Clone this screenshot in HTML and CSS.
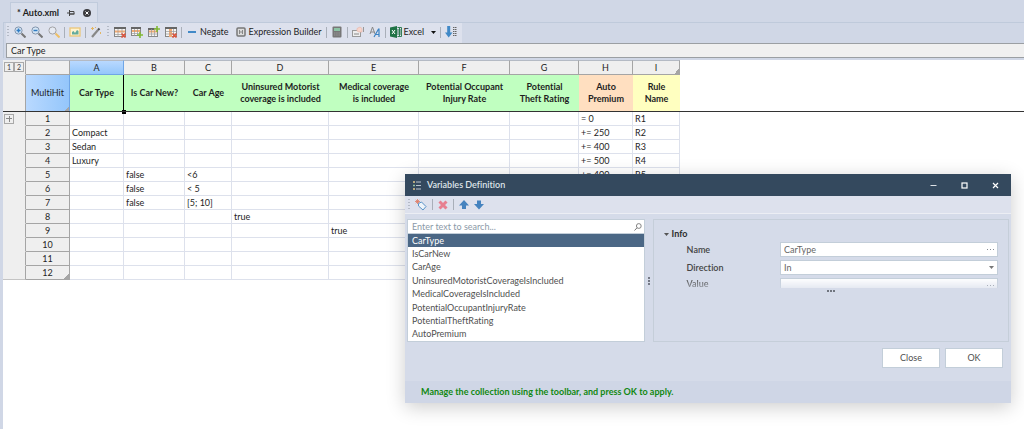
FILE: index.html
```
<!DOCTYPE html>
<html lang="en">
<head>
    <meta charset="UTF-8">
    <meta name="viewport" content="width=device-width, initial-scale=1.0">
    <title>Auto.xml</title>
    <link rel="stylesheet" href="styles.css">
</head>
<body>
    <div class="tabs">
        <div class="tab">
            <span class="tab-name">* Auto.xml</span>
            <button class="icon-btn" aria-label="Pin"><svg width="8" height="8" viewBox="0 0 8 8"><path d="M0 4h2.500M2.500 1v6M3 2.500h4v2.500H3M3 5h4.500" fill="none" stroke="#444"/></svg></button>
            <button class="icon-btn" aria-label="Close tab"><svg width="8" height="8" viewBox="0 0 8 8"><circle cx="4" cy="4" r="4" fill="#3c3c40"/><path d="M2.500 2.500l3 3M5.500 2.500l-3 3" stroke="#fff"/></svg></button>
        </div>
    </div>

    <div class="editor">
        <div class="toolbar">
            <span class="grip"></span>
            <button class="icon-btn" aria-label="Zoom in"><svg width="12" height="12" viewBox="0 0 12 12"><circle cx="4.500" cy="4.500" r="3.600" fill="#d7e6f5" stroke="#8295ad"/><path d="M7.500 7.500l4 4" stroke="#777" stroke-width="2"/><path d="M2.500 4.500h4M4.500 2.500v4" stroke="#2f7cc4" stroke-width="1.500"/></svg></button>
            <button class="icon-btn" aria-label="Zoom out"><svg width="12" height="12" viewBox="0 0 12 12"><circle cx="4.500" cy="4.500" r="3.600" fill="#d7e6f5" stroke="#8295ad"/><path d="M7.500 7.500l4 4" stroke="#777" stroke-width="2"/><path d="M2.500 4.500h4" stroke="#2f7cc4" stroke-width="1.500"/></svg></button>
            <button class="icon-btn" aria-label="Zoom reset"><svg width="12" height="12" viewBox="0 0 12 12"><circle cx="4.500" cy="4.500" r="3.600" fill="#e6eaf2" stroke="#a3a3a6"/><path d="M7.500 7.500l4 4" stroke="#eebf66" stroke-width="2"/></svg></button>
            <span class="sep"></span>
            <button class="icon-btn" aria-label="Picture"><svg width="12" height="12" viewBox="0 0 12 12"><rect x="1" y="2" width="10" height="8" fill="#fff3cf" stroke="#ecc67a" stroke-width="1.300"/><path d="M3 8.500V6l1.500-1L6 7l2-3 1.500 1v3.500z" fill="#64ab9d"/></svg></button>
            <span class="sep"></span>
            <button class="icon-btn" aria-label="Wizard"><svg width="12" height="12" viewBox="0 0 12 12"><path d="M2 11l6-7" stroke="#888" stroke-width="2.200"/><path d="M8 4l1.500-1.500" stroke="#555" stroke-width="2.200"/><path d="M2.500 1v3M1 2.500h3M10.500 6v2M5.500 1v1" stroke="#e3b664"/></svg></button>
            <span class="grip"></span>
            <button class="icon-btn" aria-label="Delete row"><svg width="12" height="12" viewBox="0 0 12 12"><rect x=".5" y="1.500" width="11" height="9" fill="#f5f5f5" stroke="#888"/><path d="M0 2h12" stroke="#666" stroke-width="2"/><path d="M1 5.500h10" stroke="#f2aa73" stroke-width="2"/><path d="M1 8.500h10M4 3v8M8 3v8" stroke="#999" stroke-width=".7"/><path d="M7.500 7.500l4 4M11.500 7.500l-4 4" stroke="#dc543c" stroke-width="1.600"/></svg></button>
            <button class="icon-btn" aria-label="Insert row"><svg width="12" height="12" viewBox="0 0 12 12"><rect x=".5" y="1.500" width="9" height="8" fill="#f5f5f5" stroke="#888"/><path d="M0 2h10" stroke="#666" stroke-width="2"/><path d="M1 5h8" stroke="#f2aa73" stroke-width="2"/><path d="M1 7.500h8M3.500 3v7M6.500 3v7" stroke="#999" stroke-width=".7"/><path d="M9 6v6M6 9h6" stroke="#82ba35" stroke-width="1.600"/></svg></button>
            <button class="icon-btn" aria-label="Insert column"><svg width="12" height="12" viewBox="0 0 12 12"><rect x=".5" y="2.500" width="9" height="8" fill="#f5f5f5" stroke="#888"/><path d="M0 3h6" stroke="#666" stroke-width="2"/><path d="M1 5.500h8" stroke="#f2aa73" stroke-width="2"/><path d="M1 8h8M3.500 3v7M6.500 3v7" stroke="#999" stroke-width=".7"/><path d="M9 0v6M6 3h6" stroke="#82ba35" stroke-width="1.600"/></svg></button>
            <button class="icon-btn" aria-label="Delete column"><svg width="12" height="12" viewBox="0 0 12 12"><rect x=".5" y="1.500" width="11" height="9" fill="#f5f5f5" stroke="#888"/><path d="M0 2h12" stroke="#666" stroke-width="2"/><path d="M5.500 3v8" stroke="#f2aa73" stroke-width="3"/><path d="M1 5.500h10M1 8h10M8.500 3v8" stroke="#999" stroke-width=".7"/><path d="M7.500 7.500l4 4M11.500 7.500l-4 4" stroke="#dc543c" stroke-width="1.600"/></svg></button>
            <span class="sep"></span>
            <button class="text-btn negate"><svg width="8" height="8" viewBox="0 0 8 8"><path d="M0 4h8" stroke="#4189c7" stroke-width="2"/></svg>Negate</button>
            <button class="text-btn builder"><svg width="10" height="10" viewBox="0 0 10 10"><rect x="1" y="1" width="8" height="8" rx="1" fill="#ddd" stroke="#777" stroke-width="1.500"/><path d="M3.500 3v4M6.500 3v4M3.500 5h3" stroke="#888"/></svg>Expression Builder</button>
            <span class="sep"></span>
            <button class="icon-btn" aria-label="Calculator"><svg width="12" height="12" viewBox="0 0 12 12"><rect x="1.500" y=".5" width="9" height="11" rx="1" fill="#777"/><rect x="3" y="2" width="6" height="3" fill="#8cc3a4"/><path d="M3 7h6M3 9h6" stroke="#999" stroke-dasharray="1.500 .7"/></svg></button>
            <span class="sep"></span>
            <button class="icon-btn" aria-label="Rename"><svg width="12" height="12" viewBox="0 0 12 12"><rect x=".5" y="4.500" width="8" height="6" fill="#eee" stroke="#999"/><path d="M2 8h5" stroke="#888"/><path d="M5 5V2.500l3-1.500 2 1.500V6H7z" fill="#f6d5cc" stroke="#eab7aa" stroke-width=".7"/><path d="M11.500 1v5" stroke="#999"/></svg></button>
            <button class="icon-btn" aria-label="Font"><svg width="12" height="12" viewBox="0 0 12 12"><path d="M1 8l2.500-7L6 8M2 6h3.500" fill="none" stroke="#888"/><path d="M5 11l4.500-8H10v8M6.500 8.500H10" fill="none" stroke="#3b83c4" stroke-width="1.200"/></svg></button>
            <span class="sep"></span>
            <button class="text-btn excel"><svg width="12" height="12" viewBox="0 0 12 12"><path d="M0 1.500L7 0v12L0 10.500z" fill="#207346"/><path d="M2 4l3 4M5 4L2 8" stroke="#fff"/><path d="M7.500 1.500h4v9h-4M7 4h4M7 6h4M7 8h4M9.500 2v8" fill="none" stroke="#207346" stroke-width=".9"/></svg>Excel<svg class="arrow" width="5" height="3" viewBox="0 0 5 3"><path d="M0 0h5L2.500 3z" fill="#111"/></svg></button>
            <span class="sep"></span>
            <button class="icon-btn" aria-label="Sort"><svg width="12" height="12" viewBox="0 0 12 12"><path d="M3.700 0v8" stroke="#4189c7" stroke-width="3"/><path d="M0 6.500h7.500L3.700 11.500z" fill="#4189c7"/><path d="M8 1.500h3.500M8 3.500h3.500M8 5.500h3.500M8 7.500h3.500M8 9.500h3.500" stroke="#666" stroke-width="1.200" stroke-dasharray="1.500 .5"/></svg></button>
        </div>
        <input class="formula" type="text" value="Car Type" aria-label="Cell content">
    </div>

    <main class="sheet">
        <table class="grid">
            <colgroup>
                <col class="w-gutter"><col class="w-num"><col class="w-a"><col class="w-b"><col class="w-c"><col class="w-d"><col class="w-e"><col class="w-f"><col class="w-g"><col class="w-h"><col class="w-i">
            </colgroup>
            <thead>
                <tr class="letters">
                    <td class="gutter"><div class="levels"><button class="outline">1</button><button class="outline">2</button></div></td>
                    <th></th><th class="active">A</th><th>B</th><th>C</th><th>D</th><th>E</th><th>F</th><th>G</th><th>H</th><th class="corner">I</th>
                </tr>
                <tr class="titles">
                    <td class="gutter"></td>
                    <th class="multi corner">MultiHit</th>
                    <th class="cond current">Car Type</th>
                    <th class="cond">Is Car New?</th>
                    <th class="cond">Car Age</th>
                    <th class="cond">Uninsured Motorist<br>coverage is included</th>
                    <th class="cond">Medical coverage<br>is included</th>
                    <th class="cond">Potential Occupant<br>Injury Rate</th>
                    <th class="cond">Potential<br>Theft Rating</th>
                    <th class="action">Auto<br>Premium</th>
                    <th class="rule">Rule<br>Name</th>
                </tr>
            </thead>
            <tbody>
                <tr><td class="gutter"><button class="outline plus" aria-label="Expand"></button></td><th>1</th><td></td><td></td><td></td><td></td><td></td><td></td><td></td><td>= 0</td><td>R1</td></tr>
                <tr><td class="gutter"></td><th>2</th><td>Compact</td><td></td><td></td><td></td><td></td><td></td><td></td><td>+= 250</td><td>R2</td></tr>
                <tr><td class="gutter"></td><th>3</th><td>Sedan</td><td></td><td></td><td></td><td></td><td></td><td></td><td>+= 400</td><td>R3</td></tr>
                <tr><td class="gutter"></td><th>4</th><td>Luxury</td><td></td><td></td><td></td><td></td><td></td><td></td><td>+= 500</td><td>R4</td></tr>
                <tr><td class="gutter"></td><th>5</th><td></td><td>false</td><td>&lt;6</td><td></td><td></td><td></td><td></td><td>+= 400</td><td>R5</td></tr>
                <tr><td class="gutter"></td><th>6</th><td></td><td>false</td><td>&lt; 5</td><td></td><td></td><td></td><td></td><td></td><td></td></tr>
                <tr><td class="gutter"></td><th>7</th><td></td><td>false</td><td>[5; 10]</td><td></td><td></td><td></td><td></td><td></td><td></td></tr>
                <tr><td class="gutter"></td><th>8</th><td></td><td></td><td></td><td>true</td><td></td><td></td><td></td><td></td><td></td></tr>
                <tr><td class="gutter"></td><th>9</th><td></td><td></td><td></td><td></td><td>true</td><td></td><td></td><td></td><td></td></tr>
                <tr><td class="gutter"></td><th>10</th><td></td><td></td><td></td><td></td><td></td><td></td><td></td><td></td><td></td></tr>
                <tr><td class="gutter"></td><th>11</th><td></td><td></td><td></td><td></td><td></td><td></td><td></td><td></td><td></td></tr>
                <tr><td class="gutter last"></td><th class="corner">12</th><td></td><td></td><td></td><td></td><td></td><td></td><td></td><td></td><td></td></tr>
            </tbody>
        </table>
        <div class="freeze-line"></div>
    </main>

    <section class="dialog" role="dialog" aria-labelledby="dialog-title">
        <header class="dialog-head">
            <svg width="9" height="9" viewBox="0 0 9 9"><path d="M3 1h5M3 4.500h5M3 8h5" stroke="#b9c3cd"/><path d="M0 1h2M0 8h2" stroke="#e3c78b" stroke-width="1.500"/><path d="M0 4.500h2" stroke="#93c2a4" stroke-width="1.500"/></svg>
            <h1 id="dialog-title">Variables Definition</h1>
            <button class="win-btn" aria-label="Minimize"><svg width="7" height="7" viewBox="0 0 7 7"><path d="M.5 3.500h6" stroke="#dde2e7"/></svg></button>
            <button class="win-btn" aria-label="Maximize"><svg width="7" height="7" viewBox="0 0 7 7"><rect x="1" y="1" width="5" height="5" fill="none" stroke="#fff" stroke-width="1.200"/></svg></button>
            <button class="win-btn" aria-label="Close window"><svg width="7" height="7" viewBox="0 0 7 7"><path d="M1 1l5 5M6 1L1 6" stroke="#fff" stroke-width="1.200"/></svg></button>
        </header>
        <div class="dialog-tools">
            <span class="grip"></span>
            <button class="icon-btn" aria-label="Add variable"><svg width="12" height="12" viewBox="0 0 12 12"><path d="M3.500 4.500L6.500 3l4.500 4.500L8 11 3.500 7z" fill="#eef4fa" stroke="#5993c8"/><path d="M2.500 0v5M0 2.500h5M.8.8l3.400 3.400M4.200.8L.8 4.200" stroke="#e07a62" stroke-width=".8"/></svg></button>
            <span class="sep"></span>
            <button class="icon-btn" aria-label="Delete variable"><svg width="10" height="10" viewBox="0 0 10 10"><path d="M1.500 1.500l7 7M8.500 1.500l-7 7" stroke="#e77f90" stroke-width="3"/></svg></button>
            <span class="sep"></span>
            <button class="icon-btn" aria-label="Move up"><svg width="10" height="10" viewBox="0 0 10 10"><path d="M5 0l5 5.500H7V9H3V5.500H0z" fill="#4583bf"/></svg></button>
            <button class="icon-btn" aria-label="Move down"><svg width="10" height="10" viewBox="0 0 10 10"><path d="M5 9.500L0 4h3V.5h4V4h3z" fill="#4583bf"/></svg></button>
        </div>
        <div class="dialog-body">
            <div class="list-pane">
                <label class="search">
                    <input type="text" placeholder="Enter text to search..." aria-label="Search">
                    <svg width="8" height="8" viewBox="0 0 8 8"><circle cx="4.800" cy="3" r="2.400" fill="none" stroke="#777" stroke-width=".9"/><path d="M3 4.800L.5 7.500" stroke="#777"/></svg>
                </label>
                <ul class="list">
                    <li><button class="selected">CarType</button></li>
                    <li><button>IsCarNew</button></li>
                    <li><button>CarAge</button></li>
                    <li><button>UninsuredMotoristCoverageIsIncluded</button></li>
                    <li><button>MedicalCoverageIsIncluded</button></li>
                    <li><button>PotentialOccupantInjuryRate</button></li>
                    <li><button>PotentialTheftRating</button></li>
                    <li><button>AutoPremium</button></li>
                </ul>
            </div>
            <div class="splitter"><svg width="2" height="8" viewBox="0 0 2 8"><path d="M1 0v8" stroke="#555b66" stroke-width="1.500" stroke-dasharray="2 1"/></svg></div>
            <div class="props">
                <h2><svg width="5" height="3" viewBox="0 0 5 3"><path d="M0 0h5L2.500 3z" fill="#555"/></svg>Info</h2>
                <div class="field">
                    <label for="name">Name</label>
                    <div class="box"><input id="name" type="text" value="CarType"><button class="more" aria-label="Edit name"></button></div>
                </div>
                <div class="field">
                    <label for="direction">Direction</label>
                    <div class="box">
                        <select id="direction"><option>In</option><option>Out</option></select>
                        <svg class="drop" width="5" height="3" viewBox="0 0 5 3"><path d="M0 0h5L2.500 3z" fill="#777"/></svg>
                    </div>
                </div>
                <div class="field faded">
                    <label for="value">Value</label>
                    <div class="box"><input id="value" type="text"><button class="more" aria-label="Edit value"></button></div>
                </div>
                <button class="more expand" aria-label="Show more"></button>
            </div>
        </div>
        <div class="dialog-buttons">
            <button>Close</button>
            <button>OK</button>
        </div>
        <footer class="dialog-foot">Manage the collection using the toolbar, and press OK to apply.</footer>
    </section>
</body>
</html>
```
FILE: styles.css
```
* {
    box-sizing: border-box;
}
body {
    margin: 0;
    min-height: 100vh;
    display: flex;
    flex-direction: column;
    position: relative;
    background: #d0d7e6;
    color: #1e1e1e;
    font-family: Lato, "Open Sans", sans-serif;
    font-size: 9px;
    line-height: 12px;
    font-variant-ligatures: none;
}
button, input, select {
    font: inherit;
    color: inherit;
    margin: 0;
    padding: 0;
    border: 0;
    background: none;
    border-radius: 0;
}
svg {
    display: block;
    flex: none;
}

/* Tabs */
.tabs {
    padding: 2px 10px 0;
    display: flex;
}
.tab {
    display: flex;
    align-items: center;
    gap: 8px;
    height: 20px;
    padding: 0 6px;
    background: #d8deeb;
    border: 1px solid #c0cbdc;
    border-bottom: 0;
}
.tab-name {
    font-weight: bold;
}

/* Toolbar */
.editor {
    margin-left: 3px;
    padding-left: 2px;
    border-top: 1px solid #bfcadb;
    border-left: 1px solid #bfcadb;
}
.toolbar {
    display: flex;
    align-items: center;
    gap: 5px;
    width: max-content;
    height: 20px;
    padding: 0 5px 2px 1px;
    background: #dde1ed;
}
.toolbar .sep {
    margin: 0 -1px;
}
.grip {
    width: 2px;
    height: 12px;
    background: repeating-linear-gradient(#b4bac6 0 1px, transparent 1px 3px);
}
.sep {
    width: 1px;
    height: 11px;
    background: #a9afb9;
}
.icon-btn {
    display: flex;
}
.text-btn {
    display: flex;
    align-items: center;
    gap: 4px;
}
.negate {
    padding-left: 2px;
}
.builder {
    gap: 3px;
    padding-left: 2px;
}
.excel {
    gap: 2px;
}
.arrow {
    margin-left: 5px;
}
.formula {
    display: block;
    width: 100%;
    height: 15px;
    padding: 0 4px;
    background: #f0f0f0;
    border: 1px solid #9b9fa3;
    border-right: 0;
}

/* Decision table */
.sheet {
    flex: 1;
    margin: 2px 0 0 3px;
    background: #fff;
    position: relative;
}
.grid {
    table-layout: fixed;
    width: 677px;
    border-collapse: separate;
    border-spacing: 0;
}
.w-gutter { width: 23px; }
.w-num { width: 44px; }
.w-a { width: 54px; }
.w-b { width: 61px; }
.w-c { width: 47px; }
.w-d { width: 97px; }
.w-e { width: 90px; }
.w-f { width: 91px; }
.w-g { width: 69px; }
.w-h { width: 54px; }
.w-i { width: 47px; }
.grid th, .grid td {
    height: 14px;
    padding: 0 2px;
    line-height: 12px;
    text-align: left;
    white-space: nowrap;
    border-right: 1px solid #dde1ec;
    border-bottom: 1px solid #dde1ec;
}
.grid th {
    font-weight: normal;
    text-align: center;
    background: #efefef;
    border-color: #a5a5a5;
}
.grid .gutter {
    padding: 0 1px;
    background: #efefef;
    border-right-color: #a5a5a5;
    border-bottom-color: #efefef;
}
.grid .last {
    border-bottom-color: #c4c4c4;
}
.grid .letters th {
    height: 15px;
    border-top: 1px solid #b4bac4;
}
.grid .active {
    background: linear-gradient(#b9d9ff, #94c6fb);
    border-color: #6fa5e6;
}
.grid .titles th {
    height: 37px;
    font-weight: bold;
    border-right: 0;
}
.grid .titles .multi {
    font-weight: normal;
    border-right: 1px solid #6fa5e6;
}
.grid .titles .cond { background: #c0ffc0; }
.grid .titles .action { background: #ffdfc0; }
.grid .titles .rule { background: #ffffc0; }
.grid .titles .current {
    position: relative;
    border-right: 1px solid #000;
}
.current::after {
    content: "";
    position: absolute;
    right: -3px;
    bottom: -3px;
    width: 4px;
    height: 4px;
    background: #000;
}
.grid .corner {
    background-image: linear-gradient(135deg, transparent 50%, #a5a5a5 50%);
    background-size: 5px 5px;
    background-repeat: no-repeat;
    background-position: right bottom;
}
.grid .multi.corner {
    background: linear-gradient(135deg, transparent 50%, #a5a5a5 50%) right bottom / 5px 5px no-repeat, linear-gradient(90deg, #b9d9ff, #94c6fb);
}
.levels {
    display: flex;
}
.outline {
    display: block;
    width: 10px;
    height: 10px;
    font-size: 7px;
    line-height: 8px;
    border: 1px solid #a9a9a9;
    color: #444;
}
.plus {
    background: linear-gradient(#888, #888) center / 6px 1px no-repeat, linear-gradient(#888, #888) center / 1px 6px no-repeat;
}
.freeze-line {
    position: absolute;
    top: 51px;
    left: 0;
    right: 0;
    height: 1px;
    background: #333;
}

/* Variables dialog */
.dialog {
    position: absolute;
    top: 174px;
    left: 405px;
    right: 13px;
    background: #d5dbe9;
    color: #505050;
    box-shadow: 0 4px 18px rgba(0, 0, 0, 0.2);
}
.dialog-head {
    display: flex;
    align-items: center;
    height: 22px;
    padding: 0 0 0 8px;
    background: #34495e;
    color: #dfe4e9;
}
.dialog-head h1 {
    flex: 1;
    margin: 0 0 0 5px;
    font-size: 9px;
    font-weight: 600;
}
.win-btn {
    width: 31px;
    height: 22px;
    display: flex;
    align-items: center;
    justify-content: center;
}
.dialog-tools {
    display: flex;
    align-items: center;
    gap: 5px;
    height: 18px;
    padding: 0 3px;
    background: #dde1ed;
    border-bottom: 1px solid #eceef4;
}
.dialog-body {
    display: grid;
    grid-template-columns: 2fr 8px 3fr;
    padding: 5px 2px 0;
}
.list-pane {
    display: flex;
    flex-direction: column;
    min-width: 0;
}
.search {
    display: flex;
    align-items: center;
    height: 15px;
    padding: 0 2px 0 4px;
    background: #fff;
    border: 1px solid #c3ced9;
}
.search input {
    flex: 1;
    min-width: 0;
    outline: none;
}
.search input::placeholder {
    color: #8c9aa8;
}
.list {
    display: grid;
    grid-auto-rows: 1fr;
    height: 108px;
    margin: 0;
    padding: 0;
    list-style: none;
    background: #fff;
    border: 1px solid #c3ced9;
    border-top: 0;
}
.list li {
    display: flex;
}
.list button {
    flex: 1;
    padding: 0 4px;
    line-height: 12px;
    text-align: left;
}
.list .selected {
    background: #4b6785;
    color: #fff;
}
.splitter {
    display: flex;
    align-items: center;
    justify-content: center;
}
.props {
    min-width: 0;
    padding: 8px 10px 0;
    border: 1px solid #c5ced9;
}
.props h2 {
    display: flex;
    align-items: center;
    gap: 3px;
    margin: 0 0 2px;
    font-size: 9px;
    font-weight: bold;
    color: #2d2d2d;
}
.field {
    display: flex;
    align-items: center;
    margin-bottom: 3px;
    padding-left: 23px;
    color: #666;
}
.field label {
    flex: 0 0 30%;
    font-weight: 600;
    color: #444;
}
.box {
    flex: 1;
    position: relative;
    display: flex;
    align-items: center;
    height: 15px;
    padding: 0 3px;
    background: #fff;
    border: 1px solid #c3ced9;
}
.box input, .box select {
    flex: 1;
    min-width: 0;
    appearance: none;
}
.drop {
    position: absolute;
    right: 3px;
    pointer-events: none;
}
.more {
    width: 7px;
    height: 6px;
    background: repeating-linear-gradient(90deg, #858a94 0 1px, transparent 1px 3px) center / 7px 1px no-repeat;
}
.faded {
    height: 10px;
    margin-bottom: 0;
    align-items: flex-start;
    overflow: hidden;
    -webkit-mask-image: linear-gradient(#000, rgba(0, 0, 0, 0.4));
    mask-image: linear-gradient(#000, rgba(0, 0, 0, 0.4));
}
.expand {
    display: block;
    margin: 0 auto;
    background: repeating-linear-gradient(90deg, #70757f 0 2px, transparent 2px 3px) center / 8px 2px no-repeat;
    width: 8px;
}
.dialog-buttons {
    display: flex;
    justify-content: flex-end;
    gap: 5px;
    padding: 6px 8px 13px;
}
.dialog-buttons button {
    width: 58px;
    height: 20px;
    background: #fff;
    border: 1px solid #c3ced9;
}
.dialog-foot {
    height: 22px;
    padding: 0 16px;
    line-height: 22px;
    font-weight: bold;
    color: #118811;
    background: #cfd6e6;
}
```
